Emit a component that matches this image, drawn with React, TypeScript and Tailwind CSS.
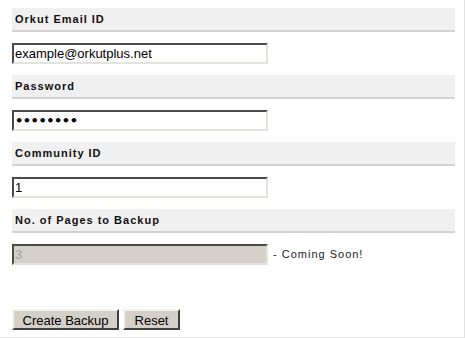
import React from 'react';

const inputCls =
  "block h-[21px] w-[256px] border-2 border-t-[#4a4a4a] border-l-[#4a4a4a] border-b-[#e4e2dc] border-r-[#e4e2dc] px-[1px] text-[13px] text-black outline-none";

function Header({ children }: { children: React.ReactNode }) {
  return (
    <div className="flex h-[24px] items-center border-b-2 border-[#d2d2d2] bg-[#f0f0f0] pl-[3px] text-[11px] font-bold tracking-[1px] text-[#111]">
      {children}
    </div>
  );
}

export default function App() {
  return (
    <div
      className="h-[338px] w-[465px] border-r border-b border-[#e2e2e2] bg-white pt-[8px] pr-[9px] pl-[12px]"
      style={{ fontFamily: '"Liberation Sans", Arial, sans-serif' }}
    >
      <form className="flex flex-col">
        <Header>Orkut Email ID</Header>
        <div className="mt-[11px] mb-[11px]">
          <input className={inputCls} defaultValue="example@orkutplus.net" />
        </div>

        <Header>Password</Header>
        <div className="mt-[11px] mb-[11px]">
          <input
            type="password"
            className={inputCls + " font-['DejaVu_Sans'] font-bold tracking-[-0.5px]"}
            defaultValue="abcdefgh"
          />
        </div>

        <Header>Community ID</Header>
        <div className="mt-[11px] mb-[11px]">
          <input className={inputCls} defaultValue="1" />
        </div>

        <Header>No. of Pages to Backup</Header>
        <div className="mt-[11px] flex items-center">
          <input
            disabled
            className={inputCls + " bg-[#d4d0c8] disabled:text-[#a3a19b] disabled:[-webkit-text-fill-color:#a3a19b]"}
            defaultValue="3"
          />
          <span className="ml-[5px] text-[11px] tracking-[1px] text-[#222]">- Coming Soon!</span>
        </div>

        <div className="mt-[44px] flex gap-[4px]">
          <button
            type="button"
            className="h-[21px] w-[107px] border-2 border-t-[#f4f3ef] border-l-[#f4f3ef] border-b-[#404040] border-r-[#404040] bg-[#d4d0c8] text-[13px] text-black"
          >
            Create Backup
          </button>
          <button
            type="button"
            className="h-[21px] w-[57px] border-2 border-t-[#f4f3ef] border-l-[#f4f3ef] border-b-[#404040] border-r-[#404040] bg-[#d4d0c8] text-[13px] text-black"
          >
            Reset
          </button>
        </div>
      </form>
    </div>
  );
}
